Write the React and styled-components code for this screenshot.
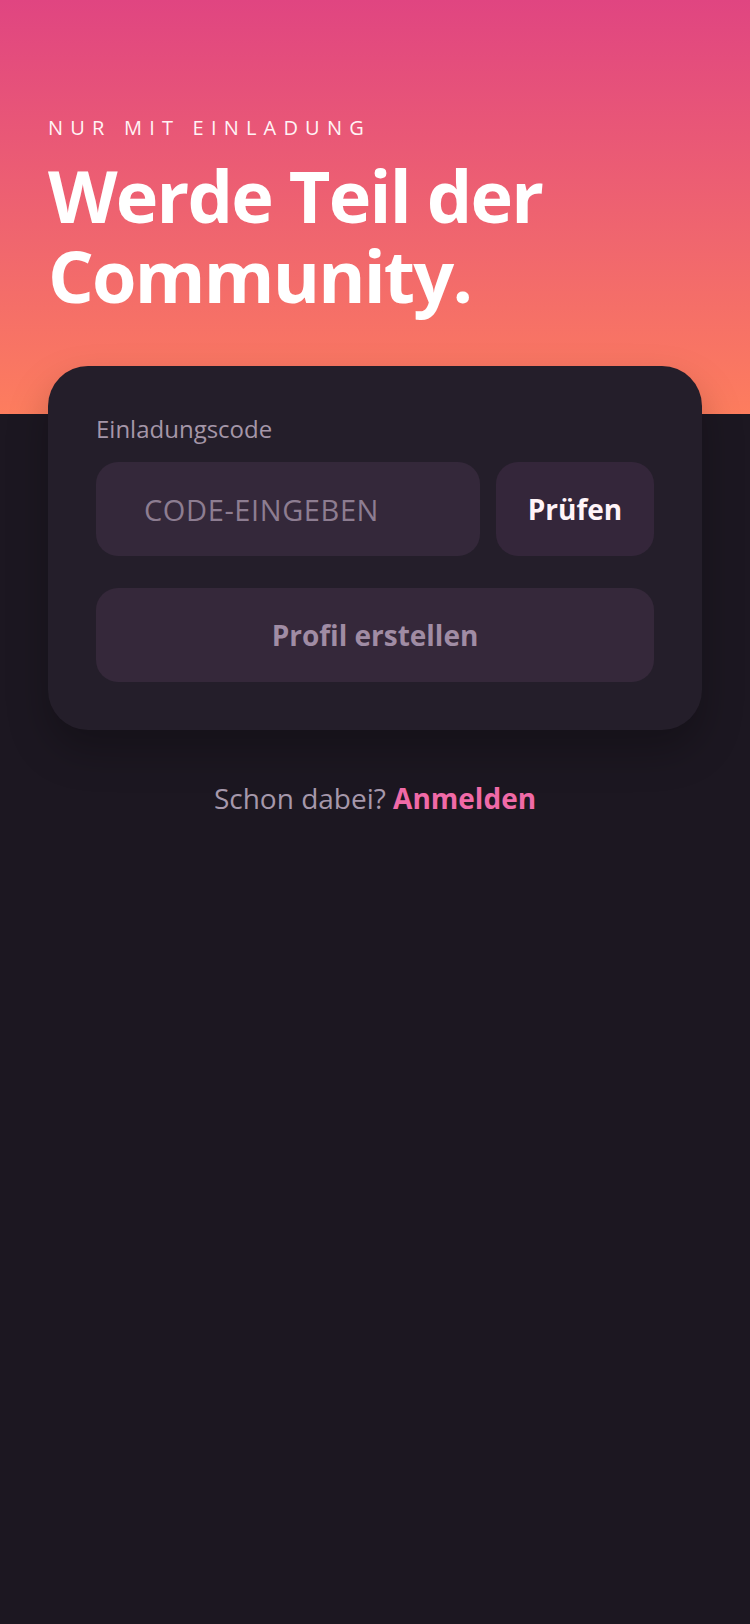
import React from "react";
import styled, { createGlobalStyle } from "styled-components";

const Global = createGlobalStyle`
  html, body { margin: 0; padding: 0; background: #1c1721; }
  body { font-family: "Open Sans", "Noto Sans", sans-serif; -webkit-font-smoothing: antialiased; }
  * { box-sizing: border-box; }
`;

const Page = styled.div`
  min-height: 1624px;
  background: linear-gradient(180deg, #e04581 0px, #f0666e 240px, #fd7d5e 414px, #1c1721 414px, #1c1721 100%);
  padding: 114px 48px 0;
  display: flex;
  flex-direction: column;
`;

const Eyebrow = styled.div`
  font-size: 20px;
  line-height: 28px;
  letter-spacing: 7.2px;
  color: #fff3f5;
  text-transform: uppercase;
`;

const Title = styled.h1`
  margin: 13px 0 0;
  font-size: 72px;
  line-height: 80px;
  font-weight: 700;
  letter-spacing: -1.8px;
  color: #ffffff;
`;

const Card = styled.div`
  margin-top: 51px;
  background: #241e2a;
  border-radius: 40px;
  padding: 48px;
  display: flex;
  flex-direction: column;
  box-shadow: 0 20px 40px rgba(0, 0, 0, 0.25);
`;

const Label = styled.label`
  font-size: 24px;
  line-height: 30px;
  color: #a596a8;
`;

const Row = styled.div`
  margin-top: 18px;
  display: flex;
  gap: 16px;
`;

const Input = styled.input`
  flex: 1;
  min-width: 0;
  height: 94px;
  border: none;
  outline: none;
  border-radius: 22px;
  background: #34283a;
  padding: 0 48px;
  font-family: inherit;
  font-size: 29px;
  letter-spacing: 0.6px;
  color: #fff;
  &::placeholder { color: #8d7d91; }
`;

const Button = styled.button`
  height: 94px;
  border: none;
  border-radius: 22px;
  background: ${(p) => (p.$muted ? "#35283a" : "#34263a")};
  color: ${(p) => (p.$muted ? "#a08ca4" : "#fff4f8")};
  font-family: inherit;
  font-weight: 700;
  font-size: 28px;
  width: ${(p) => (p.$wide ? "100%" : "158px")};
  margin-top: ${(p) => (p.$wide ? "32px" : "0")};
  cursor: pointer;
`;

const Footer = styled.p`
  margin: 49px 0 0;
  text-align: center;
  font-size: 28px;
  line-height: 38px;
  color: #a698ab;
`;

const Link = styled.a`
  color: #f06aa7;
  font-weight: 700;
  text-decoration: none;
`;

export default function App() {
  return (
    <>
      <Global />
      <Page>
        <Eyebrow>Nur mit Einladung</Eyebrow>
        <Title>
          Werde Teil der
          <br />
          Community.
        </Title>
        <Card>
          <Label htmlFor="code">Einladungscode</Label>
          <Row>
            <Input id="code" placeholder="CODE-EINGEBEN" />
            <Button>Prüfen</Button>
          </Row>
          <Button $wide $muted>Profil erstellen</Button>
        </Card>
        <Footer>
          Schon dabei? <Link href="#">Anmelden</Link>
        </Footer>
      </Page>
    </>
  );
}
